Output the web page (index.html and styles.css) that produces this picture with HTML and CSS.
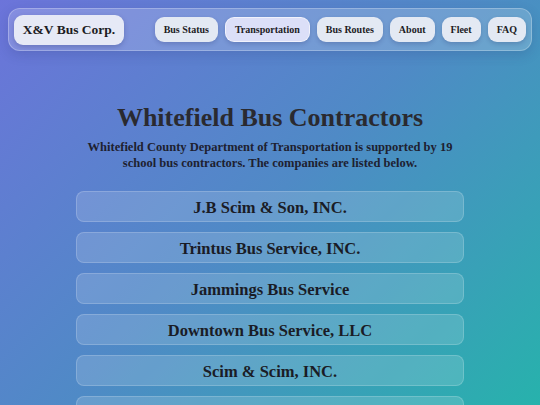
FILE: index.html
```html
<!DOCTYPE html>
<html lang="en">
<head>
<meta charset="utf-8">
<title>Whitefield Bus Contractors</title>
<link rel="stylesheet" href="styles.css">
</head>
<body>
<header class="navbar">
  <a class="brand" href="#">X&amp;V Bus Corp.</a>
  <nav class="nav">
    <a class="nav-btn" href="#">Bus Status</a>
    <a class="nav-btn active" href="#">Transportation</a>
    <a class="nav-btn" href="#">Bus Routes</a>
    <a class="nav-btn" href="#">About</a>
    <a class="nav-btn" href="#">Fleet</a>
    <a class="nav-btn" href="#">FAQ</a>
  </nav>
</header>
<main class="content">
  <h1 class="title">Whitefield Bus Contractors</h1>
  <p class="intro">Whitefield County Department of Transportation is supported by 19 school bus contractors. The companies are listed below.</p>
  <ul class="list">
    <li class="card">J.B Scim &amp; Son, INC.</li>
    <li class="card">Trintus Bus Service, INC.</li>
    <li class="card">Jammings Bus Service</li>
    <li class="card">Downtown Bus Service, LLC</li>
    <li class="card">Scim &amp; Scim, INC.</li>
    <li class="card">Whitefield Transit, INC.</li>
  </ul>
</main>
</body>
</html>
```
FILE: styles.css
```css
* { box-sizing: border-box; }
html, body { height: 100%; }
body {
  margin: 0;
  padding: 8px;
  overflow: hidden;
  font-family: "Liberation Serif", "DejaVu Serif", serif;
  font-weight: bold;
  color: #1f2230;
  background: linear-gradient(135deg, #6c74da 0%, #4f8ac6 50%, #27b2ac 100%);
  background-attachment: fixed;
}
.navbar {
  display: flex;
  align-items: center;
  justify-content: space-between;
  height: 43px;
  padding: 0 5px 0 5px;
  border-radius: 12px;
  background: rgba(255, 255, 255, 0.18);
  border: 1px solid rgba(255, 255, 255, 0.25);
  box-shadow: 0 4px 12px rgba(40, 50, 110, 0.18);
}
.brand {
  display: flex;
  align-items: center;
  justify-content: center;
  width: 110px;
  height: 30px;
  border-radius: 9px;
  background: #e6e9f6;
  color: #1c1c24;
  text-decoration: none;
  font-size: 13.5px;
  box-shadow: 0 2px 5px rgba(30, 40, 100, 0.25);
}
.nav {
  display: flex;
  gap: 7px;
}
.nav-btn {
  display: flex;
  align-items: center;
  justify-content: center;
  height: 25px;
  padding: 0 9px;
  border-radius: 9px;
  background: #e3e9f3;
  color: #1c1c24;
  text-decoration: none;
  font-size: 10px;
  box-shadow: 0 2px 4px rgba(30, 40, 100, 0.22);
}
.nav-btn.active {
  background: #dcdff8;
  border: 1px solid rgba(255,255,255,0.6);
}
.content {
  width: 388px;
  margin: 0 auto;
  padding-top: 50px;
  text-align: center;
}
.title {
  margin: 0;
  font-size: 26px;
  line-height: 34px;
  color: #2a2a30;
}
.intro {
  margin: 4px 0 0;
  font-size: 12.5px;
  line-height: 16px;
  color: #1e2130;
}
.list {
  list-style: none;
  margin: 20px 0 0;
  padding: 0;
  display: flex;
  flex-direction: column;
  gap: 10px;
}
.card {
  height: 31px;
  padding-top: 2px;
  display: flex;
  align-items: center;
  justify-content: center;
  border-radius: 8px;
  background: rgba(255, 255, 255, 0.15);
  border: 1px solid rgba(255, 255, 255, 0.18);
  font-size: 16.5px;
  color: #1a1c26;
}
```
